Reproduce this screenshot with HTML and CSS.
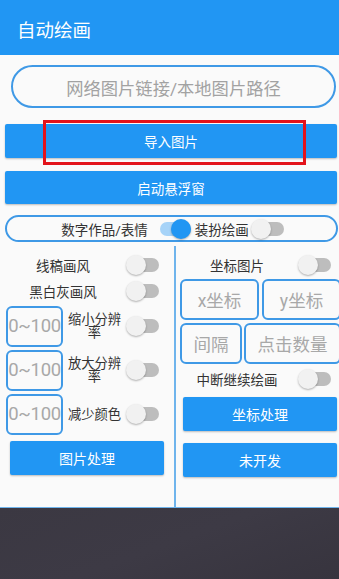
FILE: index.html
```html
<!DOCTYPE html>
<html lang="zh-CN">
<head>
<meta charset="utf-8">
<title>自动绘画</title>
<link rel="stylesheet" href="styles.css">
</head>
<body>
<div class="app">
  <header class="appbar">自动绘画</header>

  <div class="url-input">网络图片链接/本地图片路径</div>

  <div class="btn btn-import">导入图片<span class="highlight"></span></div>
  <div class="btn btn-float">启动悬浮窗</div>

  <div class="mode-row">
    <span class="mode-label">数字作品/表情</span>
    <span class="switch on mode-sw1"></span>
    <span class="mode-label mode-label2">装扮绘画</span>
    <span class="switch mode-sw2"></span>
  </div>

  <div class="columns">
    <div class="col col-left">
      <div class="row">
        <span class="label">线稿画风</span>
        <span class="switch"></span>
      </div>
      <div class="row">
        <span class="label">黑白灰画风</span>
        <span class="switch"></span>
      </div>
      <div class="row row-box">
        <span class="box box-num">0~100</span>
        <span class="label label-wrap">缩小分辨率</span>
        <span class="switch"></span>
      </div>
      <div class="row row-box">
        <span class="box box-num">0~100</span>
        <span class="label label-wrap">放大分辨率</span>
        <span class="switch"></span>
      </div>
      <div class="row row-box">
        <span class="box box-num">0~100</span>
        <span class="label label-wrap">减少颜色</span>
        <span class="switch"></span>
      </div>
      <div class="btn btn-col btn-left">图片处理</div>
    </div>
    <div class="divider"></div>
    <div class="col col-right">
      <div class="row">
        <span class="label">坐标图片</span>
        <span class="switch sw-right"></span>
      </div>
      <div class="box-grid grid-a">
        <span class="box box-field">x坐标</span>
        <span class="box box-field">y坐标</span>
      </div>
      <div class="box-grid grid-b">
        <span class="box box-field">间隔</span>
        <span class="box box-field">点击数量</span>
      </div>
      <div class="row row-resume">
        <span class="label">中断继续绘画</span>
        <span class="switch sw-right"></span>
      </div>
      <div class="btn btn-col btn-right">坐标处理</div>
      <div class="btn btn-col btn-right btn-right2">未开发</div>
    </div>
  </div>

  <div class="backdrop"></div>
</div>
</body>
</html>
```

FILE: styles.css
```css
* { box-sizing: border-box; }

html, body {
  margin: 0;
  padding: 0;
}

body {
  width: 339px;
  height: 579px;
  overflow: hidden;
  background: #fafafa;
  font-family: Roboto, "Noto Sans CJK SC", sans-serif;
}

.app {
  width: 339px;
  height: 579px;
  display: flex;
  flex-direction: column;
  background: #fafafa;
}

.appbar {
  height: 55px;
  flex: none;
  background: #2196f3;
  color: #fff;
  font-size: 18.5px;
  padding-left: 17px;
  padding-top: 3px;
  display: flex;
  align-items: center;
}

.url-input {
  margin: 10px 3px 0 11px;
  height: 43px;
  flex: none;
  border: 2px solid #3f99e6;
  border-radius: 22px;
  display: flex;
  align-items: center;
  justify-content: center;
  color: #a2a2a2;
  font-size: 17.3px;
  padding-top: 1px;
}

.btn {
  flex: none;
  background: #2196f3;
  color: #fff;
  font-size: 13.5px;
  display: flex;
  align-items: center;
  justify-content: center;
  border-radius: 2px;
  box-shadow: 0 1px 2px rgba(0, 0, 0, 0.25);
}

.btn-import {
  position: relative;
  margin: 16px 2px 0 5px;
  height: 34px;
}

.highlight {
  position: absolute;
  left: 38px;
  top: -4px;
  width: 263px;
  height: 45px;
  border: 3px solid #e3131b;
}

.btn-float {
  margin: 13px 2px 0 5px;
  height: 33px;
}

.mode-row {
  flex: none;
  margin: 11px 1px 0 5px;
  height: 27px;
  border: 2px solid #3f99e6;
  border-radius: 14px;
  display: flex;
  align-items: center;
  justify-content: center;
  padding-left: 2px;
}

.mode-label {
  font-size: 13.5px;
  color: #333;
}

.mode-sw1 { margin-left: 10px; }
.mode-label2 { margin-left: 4px; }
.mode-sw2 { margin-left: 2px; }

/* switch */
.switch {
  position: relative;
  flex: none;
  width: 33px;
  height: 20px;
}

.switch::before {
  content: "";
  position: absolute;
  left: 2px;
  right: 0;
  top: 3px;
  height: 14px;
  border-radius: 7px;
  background: #bdbdbd;
}

.switch::after {
  content: "";
  position: absolute;
  left: 0;
  top: 0;
  width: 20px;
  height: 20px;
  border-radius: 50%;
  background: #f1f1f1;
  box-shadow: 0 1px 2px rgba(0, 0, 0, 0.3);
}

.switch.on::before { background: #a6d3f8; }
.switch.on::after {
  left: 13px;
  background: #2196f3;
}

/* columns */
.columns {
  flex: none;
  margin-top: 4px;
  height: 262px;
  display: grid;
  grid-template-columns: 174px 2px 1fr;
  border-bottom: 1px solid #6fb4ec;
  overflow: hidden;
}

.divider {
  background: #6fb4ec;
}

.col {
  padding-top: 6px;
  display: flex;
  flex-direction: column;
  min-width: 0;
}

.row {
  height: 26px;
  flex: none;
  display: flex;
  align-items: center;
}

.label {
  flex: 1;
  text-align: center;
  font-size: 13.5px;
  color: #333;
}

.col-left .switch { margin-right: 15px; }

.row-box {
  height: 44px;
  align-items: center;
}

.box {
  border: 2px solid #3f99e6;
  border-radius: 6px;
  display: flex;
  align-items: center;
  justify-content: center;
  color: #a8a8a8;
  background: #fafafa;
}

.box-num {
  margin-left: 6px;
  width: 57px;
  height: 41px;
  font-size: 18.5px;
  letter-spacing: -0.3px;
  flex: none;
}

.label-wrap {
  padding: 0 4px;
  line-height: 13px;
  font-size: 13.3px;
}

.btn-left {
  margin: 5px 10px 0 10px;
  height: 34px;
  font-size: 14px;
}

.sw-right { margin-right: 8px; }

.box-grid {
  flex: none;
  display: grid;
  height: 41px;
  padding-left: 4px;
  width: 167px;
}

.grid-a {
  margin-top: 1px;
  grid-template-columns: 79px 79px;
  column-gap: 3px;
}

.grid-b {
  margin-top: 3px;
  grid-template-columns: 62px 97px;
  column-gap: 2px;
}

.box-field {
  font-size: 17.5px;
}

.row-resume { margin-top: 2px; }

.btn-right {
  margin: 5px 2px 0 7px;
  height: 34px;
  font-size: 14px;
}

.btn-right2 { margin-top: 12px; }

.backdrop {
  flex: 1;
  background: linear-gradient(160deg, #3b3842 0%, #3d3a45 50%, #37343e 100%);
}
```
